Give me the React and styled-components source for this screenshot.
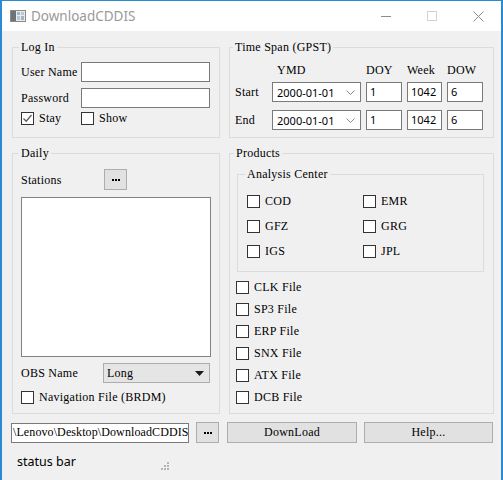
import React from 'react';
import styled, { createGlobalStyle } from 'styled-components';

const GlobalStyle = createGlobalStyle`
  html, body { margin: 0; padding: 0; background: #ffffff; }
  * { box-sizing: border-box; }
`;

const serif = `"Liberation Serif", "DejaVu Serif", serif`;
const sans = `"Noto Sans", "Liberation Sans", sans-serif`;

const Window = styled.div`
  width: 503px;
  height: 480px;
  display: flex;
  flex-direction: column;
  border-top: 1px solid #2b8ad4;
  border-left: 2px solid #2b8ad4;
  border-right: 2px solid #2b8ad4;
  background: #f0f0f0;
  font-family: ${serif};
  font-size: 12px;
  letter-spacing: 0.25px;
  color: #000;
  overflow: hidden;
`;

const TitleBar = styled.div`
  height: 30px;
  flex: none;
  display: flex;
  align-items: center;
  background: #ffffff;
  padding-left: 8px;
`;

const AppIcon = styled.svg`
  width: 16px;
  height: 12px;
  flex: none;
`;

const TitleText = styled.div`
  margin-left: 5px;
  font-family: ${sans};
  font-size: 13.5px;
  letter-spacing: 0;
  color: #9a9a9a;
  flex: 1;
`;

const CaptionButton = styled.div`
  width: 46px;
  height: 30px;
  display: flex;
  align-items: center;
  justify-content: center;
`;

const Body = styled.div`
  flex: 1;
  display: flex;
  flex-direction: column;
  padding: 10px 7px 0 10px;
`;

const Row = styled.div`
  display: flex;
  gap: 9px;
  margin-top: ${(p) => p.$mt || 0}px;
`;

const Group = styled.fieldset`
  margin: 0 0 0 ${(p) => p.$ml || 0}px;
  min-width: 0;
  width: ${(p) => p.$w}px;
  height: ${(p) => (p.$h ? `${p.$h}px` : 'auto')};
  border: 1px solid #dcdcdc;
  padding: ${(p) => p.$pad};
  flex: none;
`;

const Legend = styled.legend`
  padding: 0 2px;
  margin-left: -2px;
  line-height: 12px;
  height: 12px;
`;

const LoginGrid = styled.div`
  display: grid;
  grid-template-columns: 60px 129px;
  grid-template-rows: 20px 20px 13px;
  row-gap: 6px;
  align-items: center;
`;

const Label = styled.span`
  line-height: 20px;
  white-space: nowrap;
`;

const LineEdit = styled.div`
  height: 20px;
  border: 1px solid #7a7a7a;
  background: #ffffff;
  font-family: ${sans};
  font-size: 11px;
  letter-spacing: 0;
  line-height: 18px;
  padding-left: 3px;
  white-space: nowrap;
  overflow: hidden;
`;

const CheckCell = styled.div`
  margin-top: -4px;
`;

const Check = styled.label`
  display: flex;
  align-items: center;
  gap: 5px;
  height: 13px;
  line-height: 13px;
  white-space: nowrap;
`;

const Box = styled.span`
  width: 13px;
  height: 13px;
  flex: none;
  border: 1px solid #333333;
  background: #ffffff;
  display: flex;
  align-items: center;
  justify-content: center;
`;

const spanCols = '32px 89px 36px 35px 36px';

const TimeHeader = styled.div`
  display: grid;
  grid-template-columns: ${spanCols};
  column-gap: 5px;
  height: 12px;
  line-height: 12px;
  margin-bottom: 6px;
`;

const HeadCell = styled.span`
  padding-left: ${(p) => p.$pl || 0}px;
`;

const TimeGrid = styled.div`
  display: grid;
  grid-template-columns: ${spanCols};
  grid-auto-rows: 20px;
  column-gap: 5px;
  row-gap: 8px;
  align-items: center;
`;

const DateCombo = styled.div`
  height: 20px;
  border: 1px solid #7a7a7a;
  background: #ffffff;
  display: flex;
  align-items: center;
  justify-content: space-between;
  padding: 0 5px 0 4px;
  font-family: ${sans};
  font-size: 11px;
  letter-spacing: 0;
`;

const Column = styled.div`
  display: flex;
  flex-direction: column;
  margin-top: ${(p) => p.$mt || 0}px;
`;

const StationsRow = styled.div`
  display: grid;
  grid-template-columns: 83px 23px;
  align-items: center;
  height: 21px;
`;

const ToolButton = styled.div`
  width: 23px;
  height: 21px;
  flex: none;
  background: #e1e1e1;
  border: 1px solid #adadad;
  display: flex;
  align-items: center;
  justify-content: center;
  margin-left: ${(p) => p.$ml || 0}px;
`;

const ListBox = styled.div`
  height: 160px;
  margin-top: 7px;
  border: 1px solid #828282;
  background: #ffffff;
`;

const ObsRow = styled.div`
  display: grid;
  grid-template-columns: 82px 107px;
  align-items: center;
  margin-top: 6px;
`;

const Combo = styled.div`
  height: 20px;
  border: 1px solid #adadad;
  background: #e5e5e5;
  display: flex;
  align-items: center;
  justify-content: space-between;
  padding: 0 5px 0 3px;
`;

const AnalysisGrid = styled.div`
  display: grid;
  grid-template-columns: 116px 116px;
  grid-auto-rows: 13px;
  row-gap: 12px;
`;

const FileList = styled.div`
  display: flex;
  flex-direction: column;
  gap: 9px;
  margin-top: 9px;
`;

const BottomRow = styled.div`
  display: flex;
  align-items: center;
  margin: 8px 0 0 -1px;
  height: 21px;
`;

const PathEdit = styled.div`
  width: 178px;
  height: 20px;
  flex: none;
  border: 1px solid #7a7a7a;
  background: #ffffff;
  display: flex;
  justify-content: flex-start;
  align-items: center;
  overflow: hidden;
  white-space: nowrap;
  padding-left: 1px;
  letter-spacing: 0.1px;
`;

const PushButton = styled.div`
  width: ${(p) => p.$w}px;
  height: 21px;
  flex: none;
  margin-left: ${(p) => p.$ml}px;
  background: #e1e1e1;
  border: 1px solid #adadad;
  display: flex;
  align-items: center;
  justify-content: center;
`;

const StatusBar = styled.div`
  flex: 1;
  width: 157px;
  display: flex;
  align-items: center;
  justify-content: space-between;
  padding-left: 5px;
`;

const StatusText = styled.span`
  font-family: ${sans};
  font-size: 12.5px;
  letter-spacing: 0;
  color: #000;
`;

const Grip = styled.svg`
  width: 9px;
  height: 9px;
  margin-top: 8px;
`;

function CheckBox({ label, checked }) {
  return (
    <Check>
      <Box>
        {checked && (
          <svg width="11" height="11" viewBox="0 0 11 11">
            <polyline points="1.5,5.5 4.2,8.2 9.5,2" fill="none" stroke="#5b5b5b" strokeWidth="1.3" />
          </svg>
        )}
      </Box>
      {label}
    </Check>
  );
}

function Chevron() {
  return (
    <svg width="9" height="5" viewBox="0 0 9 5">
      <polyline points="0.5,0.5 4.5,4.5 8.5,0.5" fill="none" stroke="#8a8a8a" strokeWidth="1" />
    </svg>
  );
}

function Dots() {
  return (
    <svg width="10" height="4" viewBox="0 0 10 4">
      <rect x="1" y="1" width="2" height="2" fill="#000" />
      <rect x="4" y="1" width="2" height="2" fill="#000" />
      <rect x="7" y="1" width="2" height="2" fill="#000" />
    </svg>
  );
}

export default function App() {
  const timeRows = [
    ['Start', '2000-01-01', '1', '1042', '6'],
    ['End', '2000-01-01', '1', '1042', '6'],
  ];
  const centers = ['COD', 'EMR', 'GFZ', 'GRG', 'IGS', 'JPL'];
  const files = ['CLK File', 'SP3 File', 'ERP File', 'SNX File', 'ATX File', 'DCB File'];

  return (
    <>
      <GlobalStyle />
      <Window>
        <TitleBar>
          <AppIcon viewBox="0 0 16 12">
            <rect x="0.5" y="0.5" width="15" height="11" fill="#e8ecef" stroke="#8a8a8a" />
            <rect x="1" y="1" width="5" height="10" fill="#6d7378" />
            <rect x="7" y="2" width="3" height="3" fill="#9fb4c4" />
            <rect x="11" y="2" width="3" height="3" fill="#b8c8d4" />
            <rect x="7" y="6" width="3" height="4" fill="#b8c8d4" />
            <rect x="11" y="6" width="3" height="4" fill="#9fb4c4" />
          </AppIcon>
          <TitleText>DownloadCDDIS</TitleText>
          <CaptionButton>
            <svg width="10" height="10" viewBox="0 0 10 10">
              <line x1="0" y1="5.5" x2="10" y2="5.5" stroke="#8c8c8c" strokeWidth="1" />
            </svg>
          </CaptionButton>
          <CaptionButton>
            <svg width="10" height="10" viewBox="0 0 10 10">
              <rect x="0.5" y="0.5" width="9" height="9" fill="none" stroke="#d2d2d2" strokeWidth="1" />
            </svg>
          </CaptionButton>
          <CaptionButton>
            <svg width="11" height="11" viewBox="0 0 11 11">
              <line x1="0.5" y1="0.5" x2="10.5" y2="10.5" stroke="#8c8c8c" strokeWidth="1" />
              <line x1="10.5" y1="0.5" x2="0.5" y2="10.5" stroke="#8c8c8c" strokeWidth="1" />
            </svg>
          </CaptionButton>
        </TitleBar>

        <Body>
          <Row>
            <Group $w={208} $h={97} $pad="9px 8px 0 8px">
              <Legend>Log In</Legend>
              <LoginGrid>
                <Label>User Name</Label>
                <LineEdit />
                <Label>Password</Label>
                <LineEdit />
                <CheckCell>
                  <CheckBox label="Stay" checked />
                </CheckCell>
                <CheckCell>
                  <CheckBox label="Show" />
                </CheckCell>
              </LoginGrid>
            </Group>

            <Group $w={265} $h={97} $pad="11px 5px 0 5px">
              <Legend>Time Span (GPST)</Legend>
              <TimeHeader>
                <span />
                <HeadCell $pl={5}>YMD</HeadCell>
                <HeadCell>DOY</HeadCell>
                <HeadCell>Week</HeadCell>
                <HeadCell>DOW</HeadCell>
              </TimeHeader>
              <TimeGrid>
                {timeRows.map(([name, date, doy, week, dow]) => (
                  <React.Fragment key={name}>
                    <Label>{name}</Label>
                    <DateCombo>
                      {date}
                      <Chevron />
                    </DateCombo>
                    <LineEdit>{doy}</LineEdit>
                    <LineEdit>{week}</LineEdit>
                    <LineEdit>{dow}</LineEdit>
                  </React.Fragment>
                ))}
              </TimeGrid>
            </Group>
          </Row>

          <Row $mt={9}>
            <Group $w={208} $h={267} $pad="10px 8px 0 8px">
              <Legend>Daily</Legend>
              <Column>
                <StationsRow>
                  <Label>Stations</Label>
                  <ToolButton>
                    <Dots />
                  </ToolButton>
                </StationsRow>
                <ListBox />
                <ObsRow>
                  <Label>OBS Name</Label>
                  <Combo>
                    Long
                    <svg width="9" height="5" viewBox="0 0 9 5">
                      <polygon points="0,0 9,0 4.5,5" fill="#1a1a1a" />
                    </svg>
                  </Combo>
                </ObsRow>
                <Column $mt={8}>
                  <CheckBox label="Navigation File (BRDM)" />
                </Column>
              </Column>
            </Group>

            <Group $w={265} $h={267} $pad="9px 9px 0 6px">
              <Legend>Products</Legend>
              <Group $w={247} $ml={1} $pad="15px 8px 13px 9px">
                <Legend>Analysis Center</Legend>
                <AnalysisGrid>
                  {centers.map((c) => (
                    <CheckBox key={c} label={c} />
                  ))}
                </AnalysisGrid>
              </Group>
              <FileList>
                {files.map((f) => (
                  <CheckBox key={f} label={f} />
                ))}
              </FileList>
            </Group>
          </Row>

          <BottomRow>
            <PathEdit>\Lenovo\Desktop\DownloadCDDIS</PathEdit>
            <ToolButton $ml={7}>
              <Dots />
            </ToolButton>
            <PushButton $w={130} $ml={8}>DownLoad</PushButton>
            <PushButton $w={129} $ml={7}>Help...</PushButton>
          </BottomRow>

          <StatusBar>
            <StatusText>status bar</StatusText>
            <Grip viewBox="0 0 9 9">
              {[
                [6, 0],
                [3, 3],
                [6, 3],
                [0, 6],
                [3, 6],
                [6, 6],
              ].map(([x, y]) => (
                <rect key={`${x}-${y}`} x={x + 1} y={y + 1} width="2" height="2" fill="#b5b5b5" />
              ))}
            </Grip>
          </StatusBar>
        </Body>
      </Window>
    </>
  );
}
